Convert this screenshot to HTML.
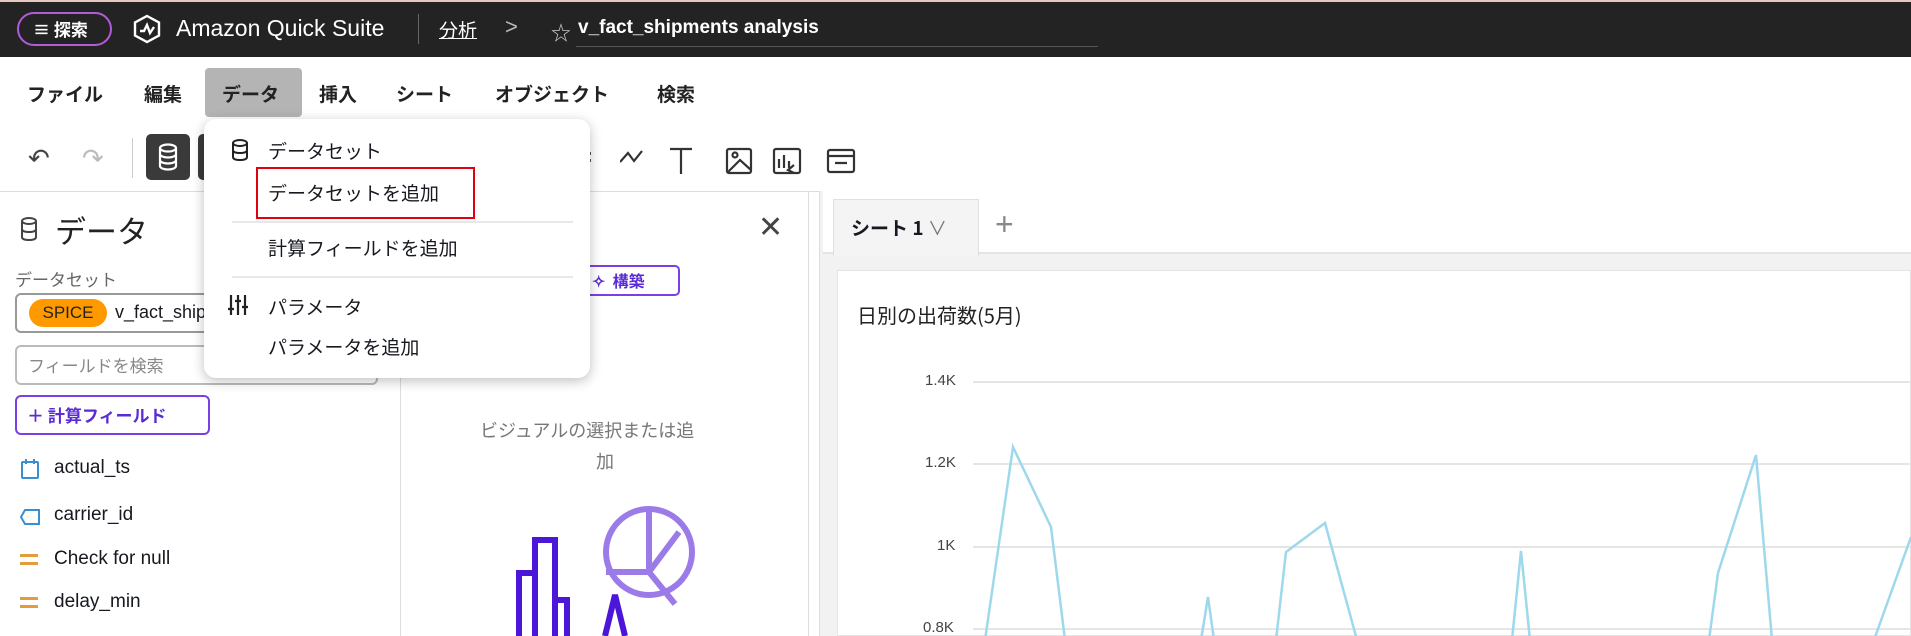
<!DOCTYPE html>
<html><head><meta charset="utf-8"><style>
*{margin:0;padding:0;box-sizing:border-box}
body{width:1911px;height:636px;overflow:hidden;background:#fff;font-family:"Liberation Sans","Noto Sans CJK JP",sans-serif;color:#16191f;position:relative}
.a{position:absolute;white-space:nowrap}
.jp{font-family:"Noto Sans CJK JP","Liberation Sans",sans-serif}
</style></head><body>
<!-- top bar -->
<div class="a" style="left:0;top:0;width:1911px;height:57px;background:#232323;border-top:2px solid #e8c7c0"></div>
<div class="a jp" style="left:17px;top:12px;width:95px;height:34px;border-radius:17px;border:2px solid #b05cd8;color:#fff;font-size:17px;font-weight:bold;line-height:30px;padding-left:14px">≡ 探索</div>
<svg class="a" style="left:132px;top:14px" width="30" height="30" viewBox="0 0 30 30"><path d="M15 2 L27 8.5 V21.5 L15 28 L3 21.5 V8.5 Z" fill="none" stroke="#fff" stroke-width="2.4"/><path d="M8 17 L12 17 L15 11 L18 19 L22 13" fill="none" stroke="#fff" stroke-width="2.4"/></svg>
<div class="a" style="left:176px;top:15px;color:#fff;font-size:23px">Amazon Quick Suite</div>
<div class="a" style="left:418px;top:14px;width:1px;height:30px;background:#666"></div>
<div class="a jp" style="left:439px;top:16px;color:#fff;font-size:19px;text-decoration:underline">分析</div>
<div class="a" style="left:505px;top:14px;color:#bbb;font-size:22px">&gt;</div>
<div class="a" style="left:551px;top:17px;color:#ccc;font-size:20px">☆</div>
<div class="a" style="left:578px;top:17px;color:#fff;font-size:19px;font-weight:bold">v_fact_shipments analysis</div>
<div class="a" style="left:576px;top:46px;width:522px;height:1px;background:#555"></div>
<!-- menu -->
<div class="a" style="left:205px;top:68px;width:97px;height:49px;background:#b4b4b4;border-radius:4px"></div>
<div class="a jp" style="top:80px;left:0;font-size:19px;font-weight:bold;color:#222">
<span class="a" style="left:27px">ファイル</span><span class="a" style="left:144px">編集</span><span class="a" style="left:222px">データ</span><span class="a" style="left:319px">挿入</span><span class="a" style="left:396px">シート</span><span class="a" style="left:495px">オブジェクト</span><span class="a" style="left:657px">検索</span></div>
<!-- toolbar -->
<div class="a" style="left:28px;top:143px;font-size:26px;color:#444">↶</div>
<div class="a" style="left:82px;top:143px;font-size:26px;color:#bbb">↷</div>
<div class="a" style="left:132px;top:138px;width:1px;height:40px;background:#ccc"></div>
<div class="a" style="left:146px;top:134px;width:44px;height:46px;background:#3a3a3a;border-radius:5px"></div>
<svg class="a" style="left:157px;top:143px" width="22" height="28" viewBox="0 0 22 28"><g fill="none" stroke="#fff" stroke-width="2.2"><ellipse cx="11" cy="5" rx="8" ry="3.5"/><path d="M3 5V23c0 2 3.5 3.5 8 3.5s8-1.5 8-3.5V5M3 11c0 2 3.5 3.5 8 3.5s8-1.5 8-3.5M3 17c0 2 3.5 3.5 8 3.5s8-1.5 8-3.5"/></g></svg>
<div class="a" style="left:198px;top:134px;width:8px;height:46px;background:#3a3a3a;border-radius:5px 0 0 5px"></div>
<div class="a" style="left:588px;top:152px;width:3px;height:3px;background:#555;box-shadow:0 7px 0 #555"></div>
<svg class="a" style="left:620px;top:146px" width="240" height="30" viewBox="0 0 240 30"><g fill="none" stroke="#333" stroke-width="2.2"><path d="M0 16 L8 7 L14 15 L22 5"/><path d="M50 3H72M61 3V28"/><rect x="107" y="3" width="24" height="24" rx="2"/><path d="M107 27 L120 14 L131 24"/><circle cx="115" cy="9" r="2.5"/><rect x="154" y="3" width="26" height="24" rx="2"/><path d="M159 22V13M164 22V9M169 22V15M174 19L168 24L174 27"/><rect x="208" y="4" width="26" height="22" rx="2"/><path d="M208 10H234M215 17h12"/></g></svg>
<div class="a" style="left:0;top:191px;width:1911px;height:1px;background:#ddd"></div>
<!-- left panel -->
<div class="a" style="left:400px;top:191px;width:1px;height:445px;background:#ddd"></div>
<svg class="a" style="left:19px;top:216px" width="20" height="26" viewBox="0 0 20 26"><g fill="none" stroke="#444" stroke-width="2"><ellipse cx="10" cy="5" rx="7" ry="3"/><path d="M3 5V21c0 2 3 3 7 3s7-1 7-3V5M3 13c0 2 3 3 7 3s7-1 7-3"/></g></svg>
<div class="a jp" style="left:55px;top:207px;font-size:31px;color:#222">データ</div>
<div class="a jp" style="left:15px;top:266px;font-size:17px;color:#666">データセット</div>
<div class="a" style="left:15px;top:293px;width:363px;height:40px;border:2px solid #999;border-radius:6px"></div>
<div class="a" style="left:29px;top:299px;width:78px;height:28px;background:#ff9900;border-radius:14px;font-size:17px;line-height:28px;text-align:center;color:#222">SPICE</div>
<div class="a" style="left:115px;top:302px;font-size:18px">v_fact_shipments</div>
<div class="a" style="left:15px;top:345px;width:363px;height:40px;border:2px solid #bbb;border-radius:6px"></div>
<div class="a jp" style="left:28px;top:352px;font-size:17px;color:#888">フィールドを検索</div>
<div class="a jp" style="left:15px;top:395px;width:195px;height:40px;border:2px solid #7b3fe4;border-radius:6px;color:#5a2bd6;font-size:17px;font-weight:bold;line-height:36px;padding-left:10px">＋ 計算フィールド</div>
<svg class="a" style="left:20px;top:458px" width="20" height="22" viewBox="0 0 20 22"><rect x="2" y="4" width="16" height="16" rx="1" fill="none" stroke="#3a8fd0" stroke-width="2"/><path d="M6 1V6M14 1V6" stroke="#3a8fd0" stroke-width="2"/></svg>
<div class="a" style="left:54px;top:457px;font-size:19px">actual_ts</div>
<svg class="a" style="left:19px;top:508px" width="22" height="18" viewBox="0 0 22 18"><path d="M6 2H20V16H6L2 9Z" fill="none" stroke="#3a8fd0" stroke-width="2"/></svg>
<div class="a" style="left:54px;top:504px;font-size:19px">carrier_id</div>
<div class="a" style="left:20px;top:554px;width:18px;height:3px;background:#e39b3b;box-shadow:0 8px 0 #e39b3b"></div>
<div class="a" style="left:54px;top:548px;font-size:19px">Check for null</div>
<div class="a" style="left:20px;top:597px;width:18px;height:3px;background:#e39b3b;box-shadow:0 8px 0 #e39b3b"></div>
<div class="a" style="left:54px;top:591px;font-size:19px">delay_min</div>
<!-- middle panel -->
<div class="a" style="left:808px;top:191px;width:1px;height:445px;background:#ddd"></div>
<div class="a jp" style="left:545px;top:207px;font-size:31px;color:#222">ル</div>
<div class="a" style="left:758px;top:210px;font-size:30px;color:#444">✕</div>
<div class="a jp" style="left:560px;top:265px;width:120px;height:31px;border:2px solid #7b3fe4;border-radius:5px;color:#5a2bd6;font-size:16px;font-weight:bold;line-height:27px;padding-left:30px">✧&nbsp; 構築</div>
<div class="a jp" style="left:480px;top:417px;font-size:18px;color:#777">ビジュアルの選択または追</div>
<div class="a jp" style="left:596px;top:448px;font-size:18px;color:#777">加</div>
<svg class="a" style="left:505px;top:500px" width="200" height="136" viewBox="0 0 200 136"><g fill="none" stroke-width="6"><circle cx="144" cy="52" r="43" stroke="#9b7be8"/><path d="M144 9V72H101M144 72L170 104M144 72L174 32" stroke="#9b7be8"/><path d="M14 136V73H30V136M30 136V40H50V136M50 136V100H62V136" stroke="#4b16d8"/><path d="M100 136L110 95L120 136" stroke="#4b16d8"/></g></svg>
<!-- right panel -->
<div class="a" style="left:819px;top:191px;width:1092px;height:445px;background:#f2f2f2;border-left:1px solid #ddd"></div>
<div class="a" style="left:823px;top:191px;width:1088px;height:63px;background:#fff;border-bottom:2px solid #e4e4e4"></div>
<div class="a jp" style="left:833px;top:199px;width:146px;height:57px;background:#f4f4f4;border:1px solid #e0e0e0;border-bottom:none;font-size:19px;font-weight:bold;line-height:55px;padding-left:17px">シート 1 <span style="font-weight:normal;color:#777">∨</span></div>
<div class="a" style="left:995px;top:206px;font-size:32px;color:#888;font-weight:300">+</div>
<div class="a" style="left:837px;top:270px;width:1074px;height:366px;background:#fff;border:1px solid #e4e4e4"></div>
<div class="a jp" style="left:857px;top:300px;font-size:20px;color:#222">日別の出荷数(5月)</div>
<div class="a" style="top:372px;left:0;font-size:15px;color:#444">
<span class="a" style="left:925px;top:0">1.4K</span><span class="a" style="left:925px;top:82px">1.2K</span><span class="a" style="left:937px;top:165px">1K</span><span class="a" style="left:923px;top:247px">0.8K</span></div>
<svg class="a" style="left:0;top:0" width="1911" height="636"><g stroke="#e5e5e5" stroke-width="2"><path d="M973 382H1911M973 464H1911M973 547H1911M973 629H1911"/></g><polyline fill="none" stroke="#9ed8ec" stroke-width="2.5" points="985,640 1013,447 1051,527 1065,640"/><polyline fill="none" stroke="#9ed8ec" stroke-width="2.5" points="1201,640 1208,597 1214,640"/><polyline fill="none" stroke="#9ed8ec" stroke-width="2.5" points="1276,640 1286,552 1325,523 1357,640"/><polyline fill="none" stroke="#9ed8ec" stroke-width="2.5" points="1512,640 1521,551 1530,640"/><polyline fill="none" stroke="#9ed8ec" stroke-width="2.5" points="1709,640 1718,573 1756,455 1772,640"/><polyline fill="none" stroke="#9ed8ec" stroke-width="2.5" points="1874,640 1911,537"/></svg>
<!-- dropdown -->
<div class="a" style="left:204px;top:119px;width:386px;height:259px;background:#fff;border-radius:12px;box-shadow:0 3px 12px rgba(0,0,0,.25)"></div>
<svg class="a" style="left:231px;top:139px" width="18" height="22" viewBox="0 0 18 22"><g fill="none" stroke="#222" stroke-width="2"><ellipse cx="9" cy="4" rx="7" ry="3"/><path d="M2 4V18c0 2 3 3 7 3s7-1 7-3V4M2 11c0 2 3 3 7 3s7-1 7-3"/></g></svg>
<div class="a jp" style="left:268px;top:137px;font-size:19px">データセット</div>
<div class="a" style="left:256px;top:167px;width:219px;height:52px;border:2px solid #e0000f"></div>
<div class="a jp" style="left:268px;top:179px;font-size:19px">データセットを追加</div>
<div class="a" style="left:232px;top:221px;width:341px;height:2px;background:#e8e8e8"></div>
<div class="a jp" style="left:268px;top:234px;font-size:19px">計算フィールドを追加</div>
<div class="a" style="left:232px;top:276px;width:341px;height:2px;background:#e8e8e8"></div>
<svg class="a" style="left:228px;top:294px" width="20" height="22" viewBox="0 0 20 22"><g stroke="#222" stroke-width="2.2"><path d="M3 1V21M10 1V21M17 1V21"/><path d="M0 15H6M7 7H13M14 13H20"/></g></svg>
<div class="a jp" style="left:268px;top:293px;font-size:19px">パラメータ</div>
<div class="a jp" style="left:268px;top:333px;font-size:19px">パラメータを追加</div>
</body></html>
